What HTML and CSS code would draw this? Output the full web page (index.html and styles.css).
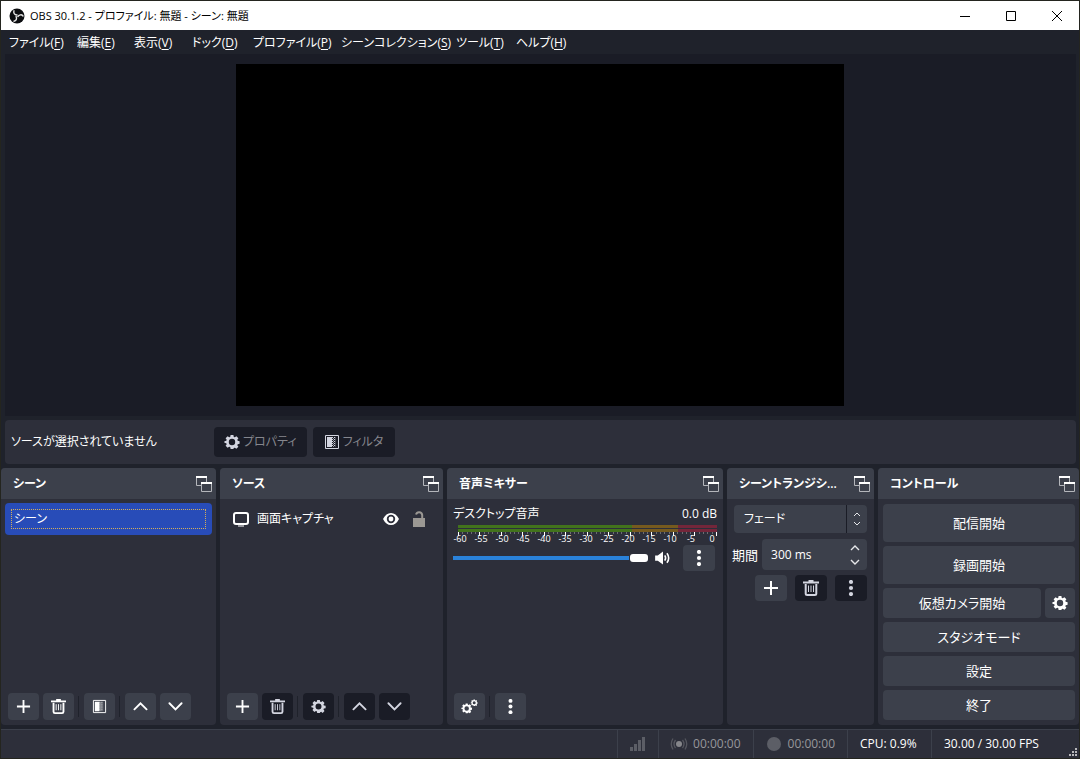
FILE: index.html
```html
<!DOCTYPE html>
<html lang="ja">
<head>
<meta charset="utf-8">
<title>OBS 30.1.2 - プロファイル: 無題 - シーン: 無題</title>
<link rel="stylesheet" href="styles.css">
</head>
<body>
<svg class="sprite" aria-hidden="true">
  <symbol id="gear" viewBox="0 0 16 16"><path fill="currentColor" fill-rule="evenodd" d="M6.600 1h2.800l.4 1.900 1 .4 1.600-1.100 2 2-1.100 1.600.4 1 1.900.4v2.600l-1.900.4-.4 1 1.100 1.600-2 2-1.600-1.100-1 .4L9.400 15H6.600l-.4-1.900-1-.4-1.600 1.100-2-2 1.100-1.600-.4-1L.4 8.800V7.200l1.900-.4.4-1L1.600 4.200l2-2 1.600 1.100 1-.4zM8 4.800a3.200 3.200 0 1 0 0 6.400 3.200 3.200 0 0 0 0-6.400z"/></symbol>
  <symbol id="plus" viewBox="0 0 16 16"><path d="M8 1v14M1 8h14" stroke="currentColor" stroke-width="2"/></symbol>
  <symbol id="trash" viewBox="0 0 16 16"><path d="M0 2.500h16M5.500 1h5" stroke="currentColor" stroke-width="2"/><path d="M2.700 4v9.500q0 1.500 1.500 1.500h7.600q1.500 0 1.500-1.500V4" fill="none" stroke="currentColor" stroke-width="2"/><path d="M5.500 5.500v6.500M8 5.500v6.500M10.500 5.500v6.500" stroke="currentColor" stroke-width="1"/></symbol>
  <symbol id="filter" viewBox="0 0 16 16"><path d="M1.500 1.500h13v13h-13z" fill="none" stroke="currentColor"/><path d="M3 3h5v10H3z" fill="currentColor"/><path d="M8.500 3v10M10.500 3v10" stroke="currentColor" stroke-dasharray="1 1"/><path d="M9.500 4v9" stroke="currentColor" stroke-dasharray="1 1" opacity=".7"/><path d="M11.500 3v10" stroke="currentColor" opacity=".25"/></symbol>
  <symbol id="up" viewBox="0 0 16 16"><path d="m1.500 11 6.500-6.500 6.500 6.500" fill="none" stroke="currentColor" stroke-width="2" stroke-linecap="round"/></symbol>
  <symbol id="down" viewBox="0 0 16 16"><path d="M1.500 4.500 8 11l6.500-6.500" fill="none" stroke="currentColor" stroke-width="2" stroke-linecap="round"/></symbol>
  <symbol id="dots" viewBox="0 0 16 16"><g fill="currentColor"><circle cx="8" cy="2" r="2.100"/><circle cx="8" cy="8" r="2.100"/><circle cx="8" cy="14" r="2.100"/></g></symbol>
  <symbol id="popout" viewBox="0 0 16 16"><path d="M5 9.500H.5v-8h10V6M5.500 7.500h10v8h-10z" fill="none" stroke="#b4b6bb"/><path d="M0 0h11v2H0zM5 6h11v2H5z" fill="#fff"/></symbol>
</svg>
<div class="window">
  <header class="titlebar">
    <svg class="logo" viewBox="0 0 16 16"><circle cx="8" cy="8" r="7.500" fill="#0c0d10"/><g fill="none" stroke="#e6e6e6" stroke-width="1.400" stroke-linecap="round"><path d="M5 2.800c-.8 2 .4 3.900 3 4.200"/><path d="M5 2.800c-.8 2 .4 3.900 3 4.200" transform="rotate(120 8 8)"/><path d="M5 2.800c-.8 2 .4 3.900 3 4.200" transform="rotate(240 8 8)"/></g></svg>
    <h1 class="title">OBS 30.1.2 - プロファイル: 無題 - シーン: 無題</h1>
    <div class="winbuttons">
      <button aria-label="最小化"><svg viewBox="0 0 10 10"><path d="M0 5.500h10"/></svg></button>
      <button aria-label="最大化"><svg viewBox="0 0 10 10"><path d="M.5.500h9v9h-9z"/></svg></button>
      <button aria-label="閉じる"><svg viewBox="0 0 10 10"><path d="m0 0 10 10M10 0 0 10"/></svg></button>
    </div>
  </header>
  <nav class="menubar">
    <button>ファイル(<u>F</u>)</button><button>編集(<u>E</u>)</button><button>表示(<u>V</u>)</button><button>ドック(<u>D</u>)</button><button>プロファイル(<u>P</u>)</button><button>シーンコレクション(<u>S</u>)</button><button>ツール(<u>T</u>)</button><button>ヘルプ(<u>H</u>)</button>
  </nav>
  <main class="preview"><div class="canvas"></div></main>
  <section class="context">
    <span class="context-label">ソースが選択されていません</span>
    <button class="btn off"><svg class="icon"><use href="#gear"/></svg>プロパティ</button>
    <button class="btn off"><svg class="icon"><use href="#filter"/></svg>フィルタ</button>
  </section>
  <div class="docks">
    <section class="dock">
      <header class="dock-head"><h2>シーン</h2><button class="popout" aria-label="シーンを切り離す"><svg class="icon"><use href="#popout"/></svg></button></header>
      <div class="scene-list"><button class="scene"><span>シーン</span></button></div>
      <div class="toolbar">
        <button class="btn tool" aria-label="追加"><svg class="icon"><use href="#plus"/></svg></button>
        <button class="btn tool" aria-label="削除"><svg class="icon"><use href="#trash"/></svg></button>
        <i class="sep"></i>
        <button class="btn tool" aria-label="フィルタ"><svg class="icon"><use href="#filter"/></svg></button>
        <i class="sep"></i>
        <button class="btn tool" aria-label="上へ"><svg class="icon"><use href="#up"/></svg></button>
        <button class="btn tool" aria-label="下へ"><svg class="icon"><use href="#down"/></svg></button>
      </div>
    </section>
    <section class="dock">
      <header class="dock-head"><h2>ソース</h2><button class="popout" aria-label="ソースを切り離す"><svg class="icon"><use href="#popout"/></svg></button></header>
      <div class="source">
        <svg class="icon" viewBox="0 0 16 16"><rect x="1" y="2" width="14" height="11" rx="2" fill="none" stroke="#fff" stroke-width="2"/><path d="M5 15h6" stroke="#fff" stroke-width="1"/></svg>
        <span class="source-name">画面キャプチャ</span>
        <button class="bare" aria-label="表示"><svg class="icon" viewBox="0 0 16 16"><path fill="#fff" fill-rule="evenodd" d="M0 8q3-6 8-6t8 6q-3 6-8 6T0 8zm8-4.200a4.200 4.200 0 1 0 0 8.400 4.200 4.200 0 0 0 0-8.400z"/><circle cx="8" cy="8" r="2.400" fill="#fff"/></svg></button>
        <button class="bare" aria-label="ロック"><svg class="icon" viewBox="0 0 16 16"><path d="M2 7h12v9H2z" fill="#9b9893"/><path d="M5 3.500a3.200 3.200 0 0 1 6.200.5v4" fill="none" stroke="#9b9893" stroke-width="2"/></svg></button>
      </div>
      <div class="toolbar">
        <button class="btn tool" aria-label="追加"><svg class="icon"><use href="#plus"/></svg></button>
        <button class="btn tool off" aria-label="削除"><svg class="icon"><use href="#trash"/></svg></button>
        <i class="sep"></i>
        <button class="btn tool off" aria-label="プロパティ"><svg class="icon"><use href="#gear"/></svg></button>
        <i class="sep"></i>
        <button class="btn tool off" aria-label="上へ"><svg class="icon"><use href="#up"/></svg></button>
        <button class="btn tool off" aria-label="下へ"><svg class="icon"><use href="#down"/></svg></button>
      </div>
    </section>
    <section class="dock">
      <header class="dock-head"><h2>音声ミキサー</h2><button class="popout" aria-label="音声ミキサーを切り離す"><svg class="icon"><use href="#popout"/></svg></button></header>
      <div class="mixer">
        <div class="mixer-top"><label for="volume">デスクトップ音声</label><span class="level">0.0 dB</span></div>
        <div class="meter"></div><div class="meter"></div>
        <svg class="ticks"></svg>
        <div class="scale"><span>-60</span><span>-55</span><span>-50</span><span>-45</span><span>-40</span><span>-35</span><span>-30</span><span>-25</span><span>-20</span><span>-15</span><span>-10</span><span>-5</span><span>0</span></div>
        <div class="mixer-controls">
          <input id="volume" class="volume" type="range" min="0" max="100" value="100">
          <button class="bare" aria-label="ミュート"><svg class="icon speaker" viewBox="0 0 18 16"><path d="M0 5h3l6-4.500v15L3 11H0z" fill="#fff"/><path d="M11 5q2 3 0 6M13.500 2.500q4 5.500 0 11" fill="none" stroke="#fff" stroke-width="1.800"/></svg></button>
          <button class="btn small" aria-label="メニュー"><svg class="icon"><use href="#dots"/></svg></button>
        </div>
      </div>
      <div class="toolbar">
        <button class="btn tool" aria-label="詳細設定"><svg class="icon" viewBox="0 0 16 16"><use href="#gear" x="-1" y="4" width="12" height="12"/><use href="#gear" x="9" y="0" width="8" height="8"/></svg></button>
        <i class="sep"></i>
        <button class="btn tool" aria-label="メニュー"><svg class="icon"><use href="#dots"/></svg></button>
      </div>
    </section>
    <section class="dock">
      <header class="dock-head"><h2>シーントランジシ...</h2><button class="popout" aria-label="トランジションを切り離す"><svg class="icon"><use href="#popout"/></svg></button></header>
      <div class="transition">
        <div class="select-wrap"><select aria-label="トランジション"><option>フェード</option></select><span class="select-arrows"><svg viewBox="0 0 8 14"><path d="m1 4 3-3 3 3M1 10l3 3 3-3"/></svg></span></div>
        <div class="duration"><label for="ms">期間</label><div class="spin"><input id="ms" type="text" value="300 ms"><span class="spin-arrows"><button aria-label="増やす"><svg viewBox="0 0 10 6"><path d="m1 5 4-4 4 4"/></svg></button><button aria-label="減らす"><svg viewBox="0 0 10 6"><path d="m1 1 4 4 4-4"/></svg></button></span></div></div>
        <div class="transition-tools">
          <button class="btn small" aria-label="追加"><svg class="icon"><use href="#plus"/></svg></button>
          <button class="btn small off" aria-label="削除"><svg class="icon"><use href="#trash"/></svg></button>
          <button class="btn small off" aria-label="メニュー"><svg class="icon"><use href="#dots"/></svg></button>
        </div>
      </div>
    </section>
    <section class="dock">
      <header class="dock-head"><h2>コントロール</h2><button class="popout" aria-label="コントロールを切り離す"><svg class="icon"><use href="#popout"/></svg></button></header>
      <div class="controls">
        <button class="btn tall">配信開始</button>
        <button class="btn tall">録画開始</button>
        <div class="camera"><button class="btn wide">仮想カメラ開始</button><button class="btn" aria-label="仮想カメラ設定"><svg class="icon"><use href="#gear"/></svg></button></div>
        <button class="btn">スタジオモード</button>
        <button class="btn">設定</button>
        <button class="btn">終了</button>
      </div>
    </section>
  </div>
  <footer class="status">
    <div class="cell signal"><svg class="icon" viewBox="0 0 16 16"><path fill="#5c5e66" d="M0 11h3v4H0zM4 8h3v7H4zM8 4h3v11H8zM12 1h3v14h-3z"/></svg></div>
    <div class="cell time dim"><svg class="icon" viewBox="0 0 16 16"><circle cx="8" cy="8" r="3" fill="#85868a"/><path d="M4.500 4q-3 4 0 8M11.500 4q3 4 0 8M2 2.500q-3.500 5.500 0 11M14 2.500q3.500 5.500 0 11" fill="none" stroke="#54565e" stroke-width="1.300"/></svg>00:00:00</div>
    <div class="cell time dim"><svg class="icon" viewBox="0 0 16 16"><circle cx="8" cy="8" r="7" fill="#5c5e66"/></svg>00:00:00</div>
    <div class="cell cpu">CPU: 0.9%</div>
    <div class="cell fps">30.00 / 30.00 FPS</div>
    <svg class="grip" viewBox="0 0 9 9"><path fill="#b9b9bb" d="M6 0h2v2H6zM3 3h2v2H3zM6 3h2v2H6zM0 6h2v2H0zM3 6h2v2H3zM6 6h2v2H6z"/></svg>
  </footer>
</div>
<script src="ticks.js"></script>
</body>
</html>
```

FILE: styles.css
```css
* { box-sizing: border-box; }
body {
  margin: 0;
  font: 12px/18px "Open Sans", "Noto Sans CJK JP", sans-serif;
  font-feature-settings: "palt";
  color: #fff;
  background: #1f222b;
}
button, input, select { font: inherit; font-feature-settings: inherit; color: inherit; border: 0; padding: 0; margin: 0; background: none; }
h1, h2 { margin: 0; font-size: 12px; font-weight: 400; }
.sprite { display: none; }
.icon { width: 16px; height: 16px; flex: none; display: block; overflow: visible; }
.window { min-height: 100vh; display: flex; flex-direction: column; border: 1px solid #24251f; }

.titlebar { display: flex; align-items: center; height: 29px; padding-left: 8px; gap: 5px; background: #fff; color: #000; }
.logo { width: 16px; height: 16px; }
.title { flex: 1; font-size: 11px; }
.winbuttons { display: flex; }
.winbuttons button { width: 46px; height: 29px; padding-left: 2px; display: grid; place-items: center; }
.winbuttons svg { width: 10px; height: 10px; fill: none; stroke: #000; overflow: visible; }

.menubar { display: grid; grid-template-columns: 68px 57px 58px 61px 88px 115px 60px auto; justify-content: start; height: 24px; padding: 2px 8px 0; align-items: center; }
.menubar button { white-space: nowrap; text-align: left; }
.menubar u { text-underline-offset: 2px; }

.preview { flex: 1; display: grid; place-items: center; padding: 10px 12px 10px 10px; margin: 0 3px 4px 4px; background: #1a1c26; }
.canvas { height: 342px; aspect-ratio: 16 / 9; background: #000; }

.context { display: flex; align-items: center; gap: 6px; height: 44px; margin: 0 3px 4px 4px; padding: 0 6px; border-radius: 4px; background: #2d2f3a; }
.context-label { min-width: 197px; }
.btn { display: flex; align-items: center; justify-content: center; gap: 3px; min-height: 30px; border-radius: 4px; background: #3c404b; white-space: nowrap; }
.btn.off { background: #1a1c26; color: #85868d; }
.btn.off .icon { color: #d3d5e0; }
.context .btn { min-width: 82px; padding: 0 10px; }

.docks { display: grid; grid-template-columns: 215fr 223fr 276fr 147fr 201fr; gap: 4px; min-height: 257px; }
.dock { display: flex; flex-direction: column; min-width: 0; border-radius: 4px; background: #2d2f3a; overflow: hidden; }
.dock-head { display: flex; align-items: center; gap: 4px; height: 31px; padding: 0 4px 0 12px; background: #3c404b; }
.dock-head h2 { flex: 1; white-space: nowrap; font-weight: 600; }
.toolbar { display: flex; gap: 4px; margin-top: auto; padding: 0 7px 5px; }
.tool { width: 31px; min-height: 27px; }
.tool .icon { width: 15px; height: 15px; }
.sep { width: 2px; margin: 3px 0; border-left: 1px solid #1f222b; }

.scene-list { padding: 4px; }
.scene { display: block; width: 100%; height: 32px; padding: 6px; border-radius: 4px; background: #284cb8; text-align: left; }
.scene span { display: block; height: 20px; padding-left: 2px; border: 1px dotted #d4af5a; }
.source { display: flex; align-items: center; height: 32px; margin-top: 4px; padding: 0 16px 0 13px; gap: 12px; }
.source-name { flex: 1; margin-left: -4px; }

.mixer { padding: 6px 6px 0; }
.mixer-top { display: flex; justify-content: space-between; height: 20px; }
.meter { height: 3px; margin: 0 0 1px 5px; background: linear-gradient(to right, #42731c 67%, #765a1e 67% 85%, #74263a 85%); }
.meter + .meter { margin-bottom: 0; }
.ticks { display: block; width: calc(100% - 5px); height: 4px; margin-left: 5px; overflow: visible; }
.scale { display: flex; justify-content: space-between; margin: 0 0 3px 2px; font-size: 9px; line-height: 6px; }
.scale span { display: flex; justify-content: center; width: 10px; }
.mixer-controls { display: flex; align-items: center; padding-right: 2px; }
.mixer-controls .bare { margin: 0 11px 0 6px; }
.speaker { width: 18px; height: 14px; }
.small { width: 32px; min-height: 26px; }
.volume { flex: 1; min-width: 0; height: 10px; appearance: none; background: linear-gradient(#2a82da, #2a82da) left center / calc(100% - 19px) 4px no-repeat; }
.volume::-webkit-slider-thumb { appearance: none; width: 18px; height: 8px; border-radius: 3px; background: #fff; }

.transition { display: flex; flex-direction: column; padding: 6px 7px 0 5px; }
.select-wrap { position: relative; margin-left: 2px; }
.select-wrap select { display: block; width: 100%; height: 28px; padding: 0 22px 0 10px; appearance: none; border-radius: 4px; background: #3c404b; }
.select-arrows { position: absolute; top: 0; right: 0; bottom: 0; width: 21px; border-left: 1px solid #1a1c26; display: grid; place-items: center; pointer-events: none; }
.select-arrows svg { width: 8px; height: 14px; }
.select-arrows path, .spin-arrows path { fill: none; stroke: #e6e7ea; }
.duration { display: flex; align-items: center; gap: 4px; margin: 6px 0 5px; }
.duration label { white-space: nowrap; font-size: 13px; }
.spin { flex: 1; display: flex; min-width: 0; height: 31px; border-radius: 4px; background: #3c404b; }
.spin input { flex: 1; min-width: 0; padding-left: 9px; }
.spin-arrows { display: flex; flex-direction: column; justify-content: space-between; padding: 5px 7px; }
.spin-arrows button { display: block; height: 7px; }
.spin-arrows svg { display: block; width: 10px; height: 6px; }
.spin-arrows path { stroke-width: 1.4; }
.transition-tools { display: flex; justify-content: flex-end; gap: 8px; }

.controls { display: flex; flex-direction: column; gap: 4px; padding: 5px 4px 5px 5px; font-size: 13px; }
.controls .tall { min-height: 38px; }
.camera { display: flex; gap: 4px; }
.camera .btn { width: 30px; }
.camera .wide { flex: 1; }

.status { position: relative; display: flex; justify-content: flex-end; height: 29px; margin-top: 4px; border-top: 1px solid #3c404b; background: #2d2f3a; }
.cell { display: flex; align-items: center; gap: 6px; padding: 0 12px; border-left: 1px solid #3c404b; white-space: nowrap; }
.cpu { min-width: 84px; }
.fps { min-width: 148px; }
.dim { color: #96979b; }
.grip { position: absolute; right: 1px; bottom: 1px; width: 9px; height: 9px; }
```

FILE: ticks.js
```js
// Draws one tick per decibel, a taller one at every fifth.
const ticks = document.querySelector('.ticks');
for (let db = 0; db <= 60; db++) {
  const major = db % 5 === 0;
  const tick = document.createElementNS('http://www.w3.org/2000/svg', 'rect');
  tick.setAttribute('x', (db / 60) * 99.6 + '%');
  tick.setAttribute('width', 1);
  tick.setAttribute('height', major ? 4 : 2);
  tick.setAttribute('fill', major ? '#fff' : '#6c6d74');
  tick.setAttribute('shape-rendering', 'crispEdges');
  ticks.append(tick);
}
```
